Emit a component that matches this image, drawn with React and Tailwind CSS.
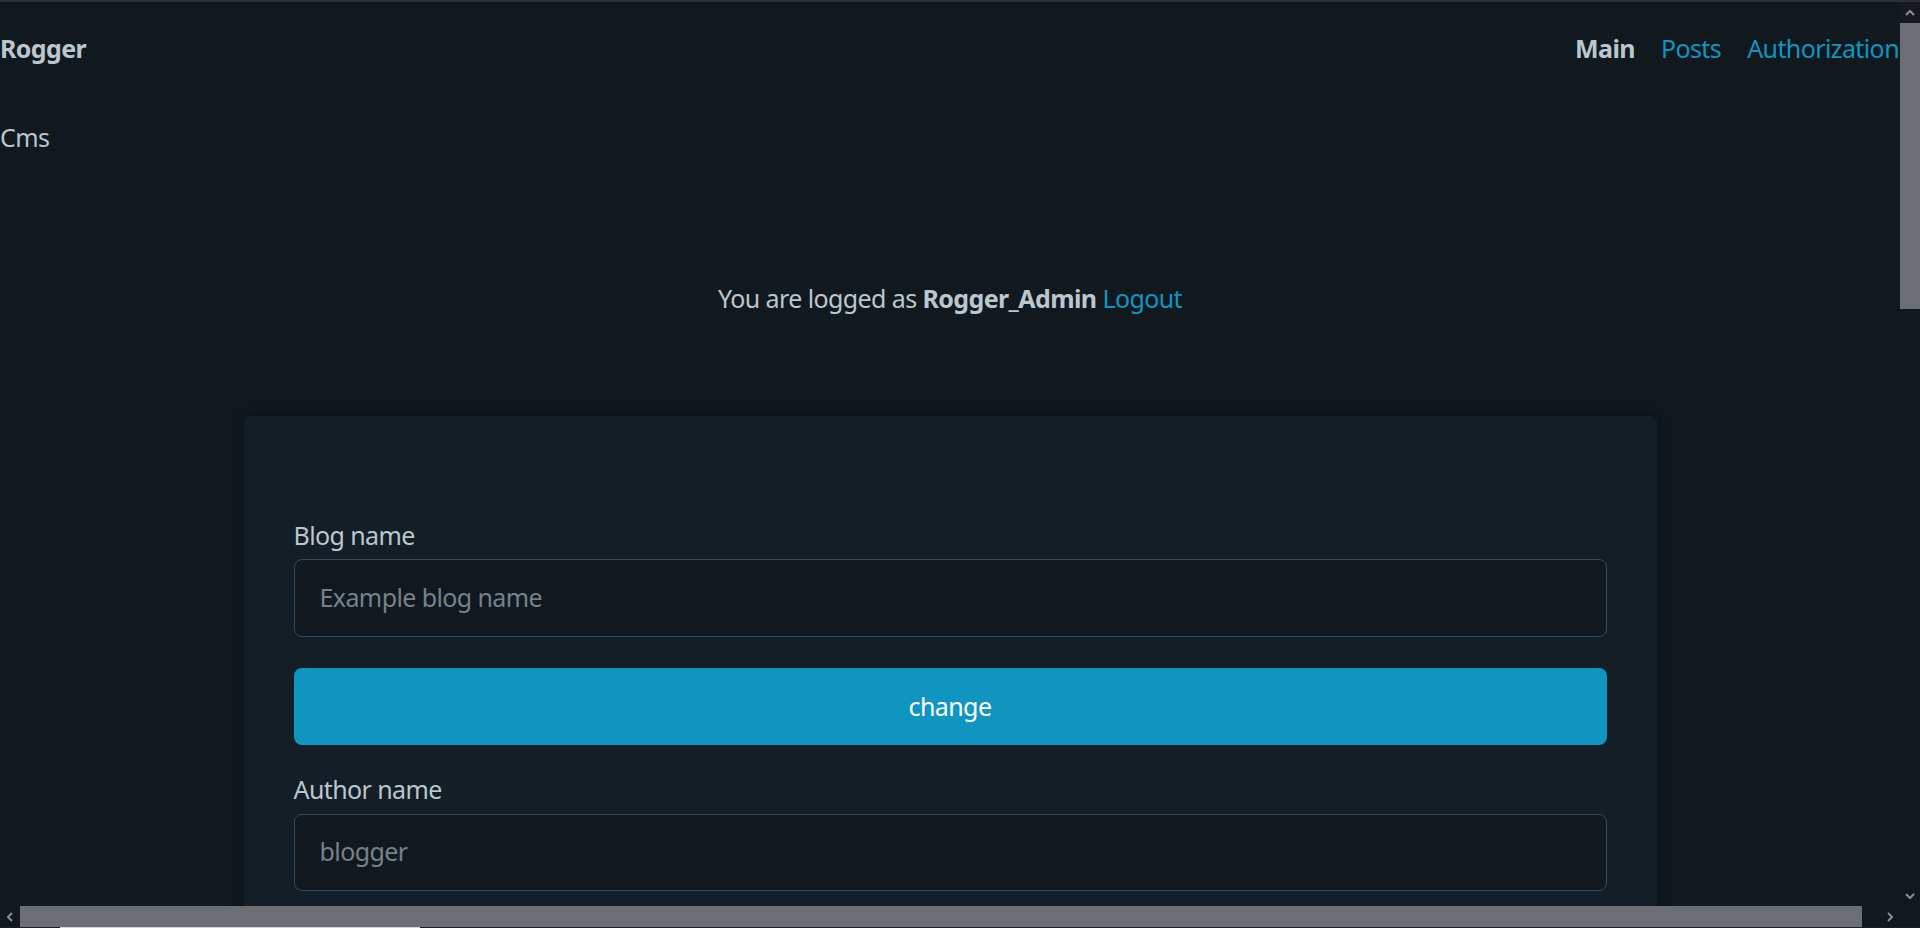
const font = "font-['Noto_Sans',sans-serif]";

function Chevron({ dir }) {
  const paths = {
    up: "M1 6 L5 2 L9 6",
    down: "M1 2 L5 6 L9 2",
    left: "M6 1 L2 5 L6 9",
    right: "M2 1 L6 5 L2 9",
  };
  const vertical = dir === "up" || dir === "down";
  return (
    <svg
      width={vertical ? 10 : 8}
      height={vertical ? 8 : 10}
      viewBox={vertical ? "0 0 10 8" : "0 0 8 10"}
      fill="none"
      stroke="#8b8e92"
      strokeWidth="2"
    >
      <path d={paths[dir]} />
    </svg>
  );
}

function Field({ label, placeholder, h }) {
  return (
    <div className="flex flex-col">
      <label className="leading-[37.5px] mb-[5px] text-[#bbc6ce]">{label}</label>
      <div
        className={`${h} rounded-[8px] border border-[#374956] bg-[#11191f] flex items-center pl-[25px]`}
      >
        <span className="text-[#73828c]">{placeholder}</span>
      </div>
    </div>
  );
}

export default function App() {
  return (
    <div
      className={`w-[1920px] h-[928px] flex flex-col overflow-hidden bg-[#11191f] text-[25px] tracking-[-0.6px] ${font}`}
    >
      {/* window edge */}
      <div className="h-[2px] bg-[#2b2e32]" />

      <div className="flex h-[904px]">
        {/* page */}
        <div className="w-[1900px] overflow-hidden flex flex-col">
          {/* nav */}
          <nav className="pt-[28px] flex justify-between leading-[37.5px]">
            <strong className="font-bold text-[#bbc6ce]">Rogger</strong>
            <ul className="flex gap-[26px] pr-[1px]">
              <li className="font-bold text-[#bbc6ce]">Main</li>
              <li className="text-[#1095c1]">Posts</li>
              <li className="text-[#1095c1]">Authorization</li>
            </ul>
          </nav>

          <p className="mt-[51px] leading-[37.5px] text-[#bbc6ce]">Cms</p>

          <p className="mt-[124px] leading-[37.5px] text-center text-[#bbc6ce]">
            You are logged as <strong className="font-bold">Rogger_Admin</strong>{" "}
            <span className="text-[#1095c1]">Logout</span>
          </p>

          {/* settings card */}
          <section className="mt-[98px] mx-auto w-[1413px] shrink-0 rounded-[6px] bg-[#141e26] shadow-[0_0_14px_rgba(0,0,0,0.35)] px-[50px] pt-[101px] pb-[40px]">
            <Field label="Blog name" placeholder="Example blog name" h="h-[78px]" />
            <button className="mt-[31px] w-full h-[77px] rounded-[8px] bg-[#1095c1] text-white">
              change
            </button>
            <div className="mt-[26px]">
              <Field label="Author name" placeholder="blogger" h="h-[77px]" />
            </div>
          </section>
        </div>

        {/* vertical scrollbar */}
        <div className="w-[20px] flex flex-col bg-[#11191f]">
          <div className="h-[21px] bg-[#16191d] flex items-center justify-center">
            <Chevron dir="up" />
          </div>
          <div className="h-[286px] bg-[#6b6e72]" />
          <div className="flex-1" />
          <div className="h-[21px] flex items-center justify-center">
            <Chevron dir="down" />
          </div>
        </div>
      </div>

      {/* horizontal scrollbar */}
      <div className="h-[21px] flex bg-[#11191f]">
        <div className="w-[20px] flex items-center justify-center">
          <Chevron dir="left" />
        </div>
        <div className="w-[1842px] bg-[#6b6e72]" />
        <div className="flex-1" />
        <div className="w-[20px] flex items-center justify-center">
          <Chevron dir="right" />
        </div>
        <div className="w-[20px]" />
      </div>

      {/* bottom edge */}
      <div className="h-[1px] flex bg-[#1c1e21]">
        <div className="ml-[60px] w-[360px] bg-[#d4d6d8]" />
      </div>
    </div>
  );
}
